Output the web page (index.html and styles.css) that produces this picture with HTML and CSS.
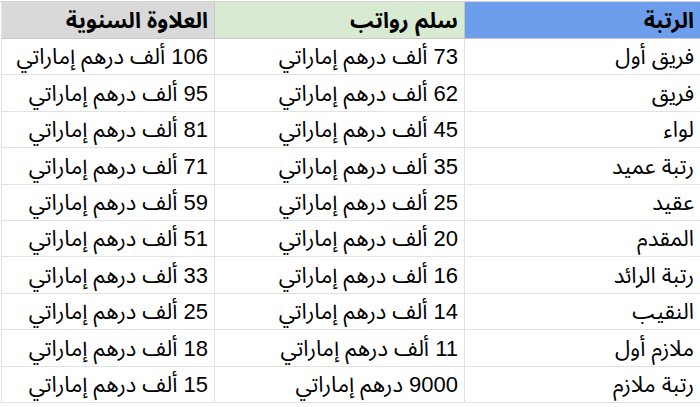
FILE: index.html
```html
<!DOCTYPE html>
<html lang="ar" dir="rtl">
<head>
<meta charset="utf-8">
<link rel="stylesheet" href="styles.css">
</head>
<body>
<div class="sheet">
  <div class="cell head blue">الرتبة</div>
  <div class="cell head green">سلم رواتب</div>
  <div class="cell head gray">العلاوة السنوية</div>

  <div class="cell">فريق أول</div>
  <div class="cell">73 ألف درهم إماراتي</div>
  <div class="cell">106 ألف درهم إماراتي</div>

  <div class="cell">فريق</div>
  <div class="cell">62 ألف درهم إماراتي</div>
  <div class="cell">95 ألف درهم إماراتي</div>

  <div class="cell">لواء</div>
  <div class="cell">45 ألف درهم إماراتي</div>
  <div class="cell">81 ألف درهم إماراتي</div>

  <div class="cell">رتبة عميد</div>
  <div class="cell">35 ألف درهم إماراتي</div>
  <div class="cell">71 ألف درهم إماراتي</div>

  <div class="cell">عقيد</div>
  <div class="cell">25 ألف درهم إماراتي</div>
  <div class="cell">59 ألف درهم إماراتي</div>

  <div class="cell">المقدم</div>
  <div class="cell">20 ألف درهم إماراتي</div>
  <div class="cell">51 ألف درهم إماراتي</div>

  <div class="cell">رتبة الرائد</div>
  <div class="cell">16 ألف درهم إماراتي</div>
  <div class="cell">33 ألف درهم إماراتي</div>

  <div class="cell">النقيب</div>
  <div class="cell">14 ألف درهم إماراتي</div>
  <div class="cell">25 ألف درهم إماراتي</div>

  <div class="cell">ملازم أول</div>
  <div class="cell">11 ألف درهم إماراتي</div>
  <div class="cell">18 ألف درهم إماراتي</div>

  <div class="cell">رتبة ملازم</div>
  <div class="cell">9000 درهم إماراتي</div>
  <div class="cell">15 ألف درهم إماراتي</div>
</div>
</body>
</html>
```
FILE: styles.css
```css
html, body {
  margin: 0;
  padding: 0;
  background: #ffffff;
}
body {
  font-family: "Liberation Sans", "Noto Sans Arabic", Arial, sans-serif;
  color: #000;
}
.sheet {
  display: grid;
  direction: rtl;
  grid-template-columns: 236px 250px 213px;
  grid-template-rows: 37px repeat(10, 36.4px);
  width: 700px;
  margin-top: 1px;
  border-top: 1px solid #d4d4d4;
  box-sizing: border-box;
}
.cell {
  box-sizing: border-box;
  display: flex;
  align-items: flex-end;
  justify-content: flex-start;
  padding: 0 6px 5px 4px;
  font-size: 22px;
  line-height: 24px;
  white-space: nowrap;
  overflow: hidden;
  border-left: 1px solid #e2e2e2;
  border-bottom: 1px solid #e2e2e2;
}
.head {
  font-weight: bold;
  border-bottom-color: #c8c8c8;
}
.blue { background: #6d9eeb; border-left-color: #c8c8c8; }
.green { background: #d9ead3; border-left-color: #c8c8c8; }
.gray { background: #d9d9d9; }
```
